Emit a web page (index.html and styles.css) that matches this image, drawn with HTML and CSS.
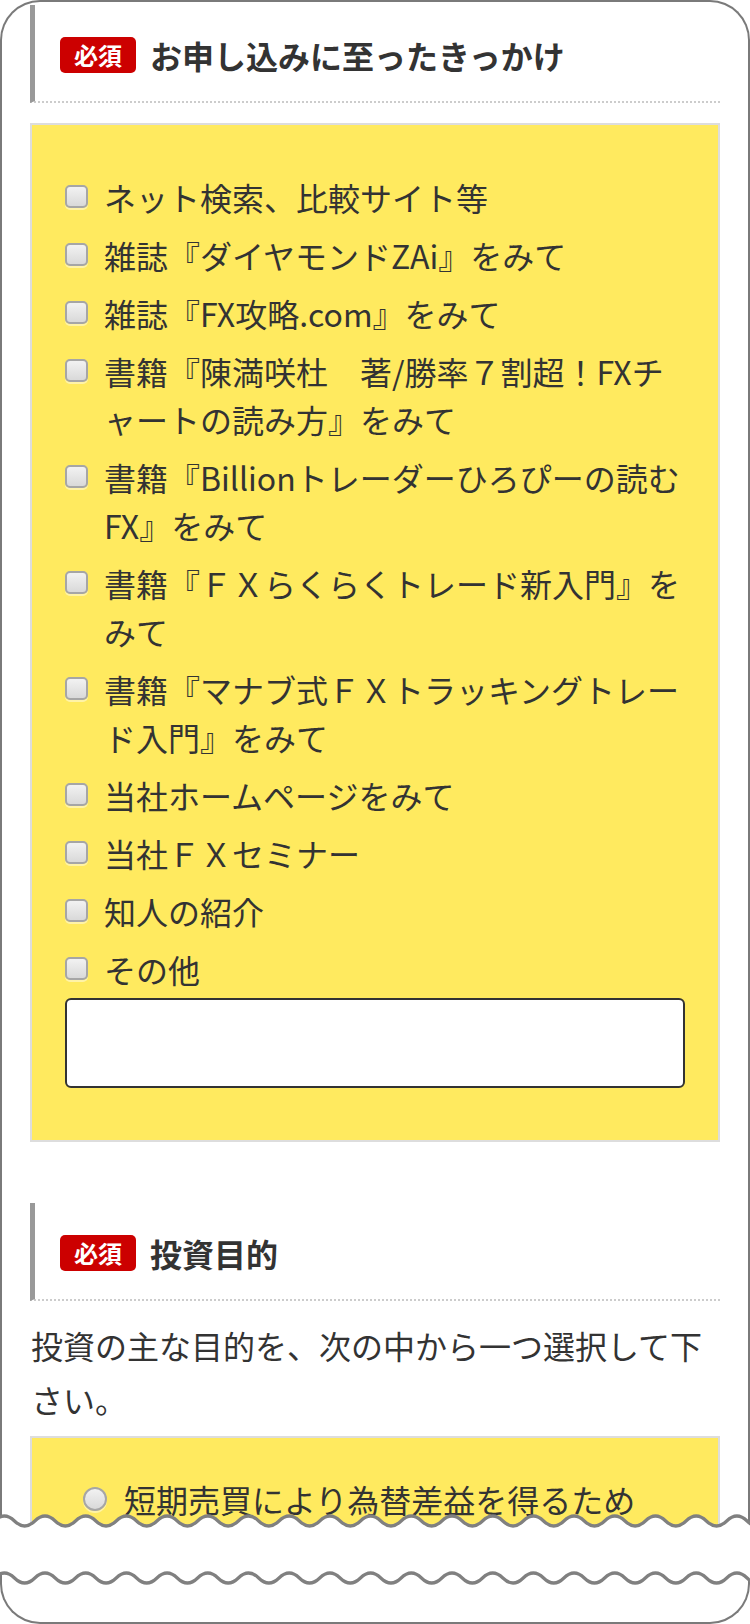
FILE: index.html
```html
<!DOCTYPE html>
<html lang="ja">
<head>
<meta charset="utf-8">
<title>お申し込みフォーム</title>
<link rel="stylesheet" href="styles.css">
</head>
<body>
<div class="device">
  <div class="screen">
    <section class="field">
      <h2 class="field-title"><span class="badge">必須</span><span class="title-text">お申し込みに至ったきっかけ</span></h2>
      <div class="panel">
        <ul class="options">
          <li class="option"><input type="checkbox" class="check"><span class="label">ネット検索、比較サイト等</span></li>
          <li class="option"><input type="checkbox" class="check"><span class="label">雑誌『ダイヤモンドZAi』をみて</span></li>
          <li class="option"><input type="checkbox" class="check"><span class="label">雑誌『FX攻略.com』をみて</span></li>
          <li class="option"><input type="checkbox" class="check"><span class="label">書籍『陳満咲杜　著/勝率７割超！FXチャートの読み方』をみて</span></li>
          <li class="option"><input type="checkbox" class="check"><span class="label">書籍『Billionトレーダーひろぴーの読むFX』をみて</span></li>
          <li class="option"><input type="checkbox" class="check"><span class="label">書籍『ＦＸらくらくトレード新入門』をみて</span></li>
          <li class="option"><input type="checkbox" class="check"><span class="label">書籍『マナブ式ＦＸトラッキングトレード入門』をみて</span></li>
          <li class="option"><input type="checkbox" class="check"><span class="label">当社ホームページをみて</span></li>
          <li class="option"><input type="checkbox" class="check"><span class="label">当社ＦＸセミナー</span></li>
          <li class="option"><input type="checkbox" class="check"><span class="label">知人の紹介</span></li>
          <li class="option"><input type="checkbox" class="check"><span class="label">その他</span></li>
        </ul>
        <textarea class="other-input"></textarea>
      </div>
    </section>
    <section class="field field-second">
      <h2 class="field-title"><span class="badge">必須</span><span class="title-text">投資目的</span></h2>
      <p class="field-note">投資の主な目的を、次の中から一つ選択して下さい。</p>
      <div class="panel panel-radio">
        <ul class="options">
          <li class="option"><input type="radio" name="purpose" class="radio"><span class="label">短期売買により為替差益を得るため</span></li>
        </ul>
      </div>
    </section>
  </div>
  <div class="screen-end"></div>
  <svg class="cut" width="750" height="95" viewBox="0 0 750 95" aria-hidden="true">
    <path class="cut-fill" d="M-5.875,16 q10.175,-10 20.35,0 t20.35,0 t20.35,0 t20.35,0 t20.35,0 t20.35,0 t20.35,0 t20.35,0 t20.35,0 t20.35,0 t20.35,0 t20.35,0 t20.35,0 t20.35,0 t20.35,0 t20.35,0 t20.35,0 t20.35,0 t20.35,0 t20.35,0 t20.35,0 t20.35,0 t20.35,0 t20.35,0 t20.35,0 t20.35,0 t20.35,0 t20.35,0 t20.35,0 t20.35,0 t20.35,0 t20.35,0 t20.35,0 t20.35,0 t20.35,0 t20.35,0 t20.35,0 t20.35,0 t20.35,0 L787.775,73 q-10.175,-10 -20.35,0 t-20.35,0 t-20.35,0 t-20.35,0 t-20.35,0 t-20.35,0 t-20.35,0 t-20.35,0 t-20.35,0 t-20.35,0 t-20.35,0 t-20.35,0 t-20.35,0 t-20.35,0 t-20.35,0 t-20.35,0 t-20.35,0 t-20.35,0 t-20.35,0 t-20.35,0 t-20.35,0 t-20.35,0 t-20.35,0 t-20.35,0 t-20.35,0 t-20.35,0 t-20.35,0 t-20.35,0 t-20.35,0 t-20.35,0 t-20.35,0 t-20.35,0 t-20.35,0 t-20.35,0 t-20.35,0 t-20.35,0 t-20.35,0 t-20.35,0 t-20.35,0 Z"/>
    <path class="cut-line" d="M-5.875,16 q10.175,-10 20.35,0 t20.35,0 t20.35,0 t20.35,0 t20.35,0 t20.35,0 t20.35,0 t20.35,0 t20.35,0 t20.35,0 t20.35,0 t20.35,0 t20.35,0 t20.35,0 t20.35,0 t20.35,0 t20.35,0 t20.35,0 t20.35,0 t20.35,0 t20.35,0 t20.35,0 t20.35,0 t20.35,0 t20.35,0 t20.35,0 t20.35,0 t20.35,0 t20.35,0 t20.35,0 t20.35,0 t20.35,0 t20.35,0 t20.35,0 t20.35,0 t20.35,0 t20.35,0 t20.35,0 t20.35,0"/>
    <path class="cut-line" d="M-5.875,73 q10.175,-10 20.35,0 t20.35,0 t20.35,0 t20.35,0 t20.35,0 t20.35,0 t20.35,0 t20.35,0 t20.35,0 t20.35,0 t20.35,0 t20.35,0 t20.35,0 t20.35,0 t20.35,0 t20.35,0 t20.35,0 t20.35,0 t20.35,0 t20.35,0 t20.35,0 t20.35,0 t20.35,0 t20.35,0 t20.35,0 t20.35,0 t20.35,0 t20.35,0 t20.35,0 t20.35,0 t20.35,0 t20.35,0 t20.35,0 t20.35,0 t20.35,0 t20.35,0 t20.35,0 t20.35,0 t20.35,0"/>
  </svg>
</div>
</body>
</html>
```

FILE: styles.css
```css
html, body {
  margin: 0;
  padding: 0;
  background: #ffffff;
}

body {
  overflow: hidden;
  font-family: "Noto Sans CJK JP", "Noto Sans", sans-serif;
  color: #333333;
}

.device {
  position: relative;
  width: 750px;
  height: 1624px;
}

.screen {
  box-sizing: border-box;
  width: 750px;
  height: 1530px;
  padding: 3px 28px 0;
  border: 2px solid #7a7a7a;
  border-bottom: none;
  border-radius: 40px 40px 0 0;
  overflow: hidden;
  background: #ffffff;
}

.screen-end {
  box-sizing: border-box;
  width: 750px;
  height: 59px;
  margin-top: 35px;
  border: 2px solid #7a7a7a;
  border-top: none;
  border-radius: 0 0 40px 40px;
  background: #ffffff;
}

.cut {
  position: absolute;
  left: 0;
  top: 1505px;
  display: block;
}

.cut-fill {
  fill: #ffffff;
}

.cut-line {
  fill: none;
  stroke: #808080;
  stroke-width: 3.2;
}

.field-title {
  box-sizing: border-box;
  display: flex;
  align-items: center;
  height: 98px;
  margin: 0;
  padding: 4px 0 0 25px;
  border-left: 5px solid #999999;
  border-bottom: 2px dotted #cccccc;
  font-size: 32px;
  font-weight: 700;
  line-height: 40px;
  color: #333333;
}

.badge {
  flex: none;
  width: 76px;
  height: 36px;
  margin-right: 14px;
  border-radius: 5px;
  background: #cc0000;
  color: #ffffff;
  font-size: 24px;
  font-weight: 700;
  line-height: 36px;
  text-align: center;
}

.panel {
  margin-top: 20px;
  padding: 48px 33px 52px;
  border: 2px solid #dddddd;
  background: #ffea5f;
}

.options {
  margin: 0;
  padding: 0;
  list-style: none;
  font-size: 32px;
  line-height: 48px;
  color: #333333;
}

.option {
  display: flex;
  align-items: flex-start;
}

.option + .option {
  margin-top: 10px;
}

.check,
.radio {
  -webkit-appearance: none;
  appearance: none;
  flex: none;
  box-sizing: border-box;
  width: 23px;
  height: 23px;
  margin: 12px 16px 0 0;
  border: 2px solid #a6a6a6;
  border-radius: 5px;
  background: linear-gradient(#f2f2f2, #d9d9d9);
  box-shadow: 0 2px 0 rgba(255, 255, 255, 0.45);
}

.radio {
  width: 24px;
  height: 24px;
  border-radius: 50%;
  margin-right: 17px;
}

.label {
  flex: 1;
  min-width: 0;
}

.other-input {
  display: block;
  box-sizing: border-box;
  width: 100%;
  height: 90px;
  margin: 5px 0 0;
  border: 2px solid #333333;
  border-radius: 6px;
  background: #ffffff;
  resize: none;
  font: inherit;
}

.field-second {
  margin-top: 61px;
}

.field-note {
  margin: 17px 0 0;
  padding-left: 1px;
  font-size: 32px;
  line-height: 54px;
  color: #333333;
}

.panel-radio {
  margin-top: 10px;
  padding: 37px 33px 60px 51px;
}
```
